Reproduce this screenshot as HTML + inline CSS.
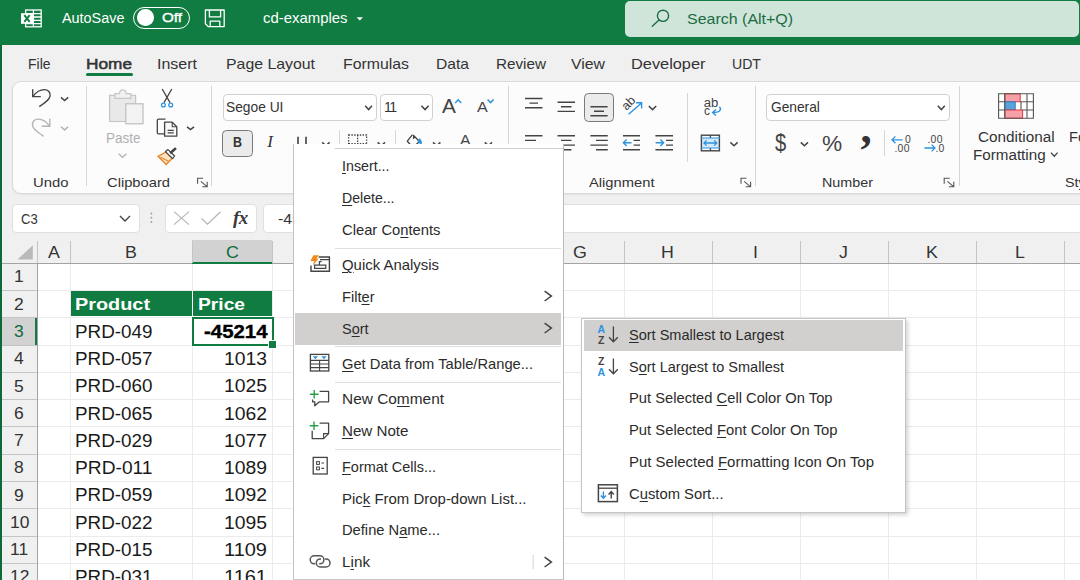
<!DOCTYPE html>
<html lang="en">
<head>
<meta charset="utf-8">
<title>cd-examples - Excel</title>
<style>
html,body{margin:0;padding:0;}
body{width:1080px;height:580px;overflow:hidden;position:relative;background:#f0f0f0;font-family:"Liberation Sans",sans-serif;}
.a{position:absolute;}
.t{position:absolute;white-space:pre;line-height:20px;height:20px;transform-origin:0 50%;}
.t u{text-decoration:underline;text-underline-offset:2px;text-decoration-thickness:1px;}
svg{position:absolute;overflow:visible;}
.vsep{position:absolute;width:1px;background:#d6d6d6;}
.hl{position:absolute;height:1px;background:#ebebeb;left:38px;width:1042px;}
.vl{position:absolute;width:1px;background:#ebebeb;top:264px;height:316px;}
.msep{position:absolute;height:1px;background:#e1dfdd;left:335px;width:226px;}
</style>
</head>
<body>
<!-- ================= TITLE BAR ================= -->
<div class="a" id="titlebar" style="left:0;top:0;width:1080px;height:45px;background:#107c41;"></div>
<div class="a" id="search" style="left:625.2px;top:0.6px;width:454px;height:36px;background:#cfe5d9;border-radius:5px;"></div>
<div class="a" id="toggle" style="left:133px;top:7px;width:55px;height:20px;border:1.5px solid #fff;border-radius:12px;"></div>
<div class="a" style="left:137.2px;top:9.4px;width:16.6px;height:16.6px;border-radius:50%;background:#fff;"></div>
<svg id="ic-excel" style="left:0;top:0" width="60" height="45" viewBox="0 0 60 45">
  <g fill="none" stroke="#fff" stroke-width="1.3">
    <rect x="25.6" y="10" width="15.6" height="16.8"/>
    <path d="M33.4 10V26.8M33.4 13.6H41.2M33.4 17H41.2M33.4 20.3H41.2M33.4 23.6H41.2M25.6 13.6H33.4M25.6 23.6H33.4"/>
  </g>
  <rect x="21" y="13.2" width="12.4" height="10.6" fill="#fff"/>
  <path d="M24.3 15.2L29.7 21.8M29.7 15.2L24.3 21.8" stroke="#107c41" stroke-width="1.9" fill="none"/>
</svg>
<svg id="ic-save" style="left:200px;top:5px" width="30" height="26" viewBox="200 5 30 26">
  <g fill="none" stroke="#fff" stroke-width="1.3" stroke-linejoin="round">
    <path d="M205.4 10H224.2V26.6H208.2L205.4 23.8Z"/>
    <path d="M209.4 10V16.9H220.6V10"/>
    <path d="M210.2 26.6V21.2H219.8V26.6"/>
  </g>
</svg>
<svg id="ic-caret" style="left:355px;top:15px" width="10" height="8" viewBox="355 15 10 8"><path d="M356.6 17.2H363L359.8 20.6Z" fill="#fff"/></svg>
<svg id="ic-search" style="left:648px;top:6px" width="26" height="24" viewBox="648 6 26 24">
  <g fill="none" stroke="#1e6b43" stroke-width="1.4" stroke-linecap="round">
    <circle cx="663" cy="15.8" r="5.6"/><path d="M659 20L652.3 26.2"/>
  </g>
</svg>


<!-- ================= TABS ================= -->
<div class="a" style="left:85.8px;top:73.1px;width:47.2px;height:3px;background:#107c41;border-radius:1.5px;"></div>

<!-- ================= RIBBON ================= -->
<div class="a" id="ribbon" style="left:12px;top:80.5px;width:1090px;height:111.5px;background:#fcfcfc;border:1px solid #dadada;border-radius:9px;box-shadow:0 1px 2px rgba(0,0,0,.06);"></div>
<div class="vsep" style="left:86px;top:86px;height:100px;"></div>
<div class="vsep" style="left:211px;top:86px;height:100px;"></div>
<div class="vsep" style="left:508px;top:86px;height:100px;"></div>
<div class="vsep" style="left:755px;top:86px;height:100px;"></div>
<div class="vsep" style="left:959px;top:86px;height:100px;"></div>
<div class="vsep" style="left:687px;top:93px;height:69px;"></div>
<div class="vsep" style="left:339px;top:130px;height:26px;"></div>
<div class="vsep" style="left:395px;top:130px;height:26px;"></div>
<div class="vsep" style="left:884px;top:130px;height:26px;"></div>
<!-- combo boxes -->
<div class="a" style="left:223px;top:94px;width:152px;height:25px;background:#fff;border:1px solid #d1d1d1;border-radius:4px;"></div>
<div class="a" style="left:379.6px;top:94px;width:51.6px;height:25px;background:#fff;border:1px solid #d1d1d1;border-radius:4px;"></div>
<div class="a" style="left:766px;top:94px;width:182px;height:25px;background:#fff;border:1px solid #d1d1d1;border-radius:4px;"></div>
<!-- Bold button (active) -->
<div class="a" style="left:222.2px;top:130px;width:28.4px;height:25.4px;background:#ebebeb;border:1.2px solid #7a7a7a;border-radius:4.5px;"></div>
<!-- bottom-align button (active) -->
<div class="a" style="left:584px;top:93.2px;width:28.4px;height:26.4px;background:#ebebeb;border:1.2px solid #7a7a7a;border-radius:4.5px;"></div>
<svg id="ribbon-icons" style="left:0;top:80px" width="1080" height="112" viewBox="0 80 1080 112">
<path d="M32.7 89.2V96.6H40.8" fill="none" stroke="#444" stroke-width="1.4"/>
<path d="M33 96.3C36.5 91.5 41 89.4 45 89.6C48.6 89.9 50.6 92.8 50.1 96C49.5 99.4 46.5 101.7 39.3 106.6" fill="none" stroke="#444" stroke-width="1.4"/>
<path d="M61 97.4L64.6 100.6L68.2 97.4" fill="none" stroke="#444" stroke-width="1.5"/>
<path d="M49.8 118.7V126.2H41.7" fill="none" stroke="#b4b4b4" stroke-width="1.4"/>
<path d="M49.5 125.9C46 121 41.6 118.9 37.6 119.1C34 119.4 32 122.3 32.5 125.5C33.1 128.9 36.4 131.4 43.6 136.3" fill="none" stroke="#b4b4b4" stroke-width="1.4"/>
<path d="M61 126.7L64.6 129.9L68.2 126.7" fill="none" stroke="#b4b4b4" stroke-width="1.5"/>
<rect x="109.6" y="95.3" width="26" height="26.2" fill="#e9e9e9" stroke="#c6c6c6" stroke-width="1.2"/>
<path d="M115 98.3V93.6H119.6C119.6 91.3 121.2 89.9 122.8 89.9C124.4 89.9 126 91.3 126 93.6H130.8V98.3Z" fill="#f1f1f1" stroke="#c6c6c6" stroke-width="1.2"/>
<rect x="125.8" y="103.8" width="17.2" height="20" fill="#f3f3f3" stroke="#bdbdbd" stroke-width="1.2"/>
<path d="M118.6 153.8L122.5 157.3L126.4 153.8" fill="none" stroke="#b4b4b4" stroke-width="1.3"/>
<path d="M162.2 89L170 102.6M171.8 89L164 102.6" fill="none" stroke="#444" stroke-width="1.3"/>
<circle cx="163.4" cy="105" r="1.9" fill="none" stroke="#2b93e0" stroke-width="1.3"/><circle cx="170.7" cy="105" r="1.9" fill="none" stroke="#2b93e0" stroke-width="1.3"/>
<path d="M164.4 133.8H158.6Q157.3 133.8 157.3 132.5V120.4Q157.3 119.1 158.6 119.1H165.5" fill="none" stroke="#444" stroke-width="1.3"/>
<path d="M164.6 122.2H172.2L176.8 126.8V136.2H164.6Z" fill="#f9f9f9" stroke="#444" stroke-width="1.3" stroke-linejoin="round"/>
<path d="M172.2 122.2V126.8H176.8M167.6 130.4H173.8M167.6 132.9H173.8" fill="none" stroke="#444" stroke-width="1.1"/>
<path d="M187 126.8L190.5 129.6L194 126.8" fill="none" stroke="#444" stroke-width="1.5"/>
<path d="M158 156.3L166 152L172.2 158.2L166.2 164.4Z" fill="#fbe3c4" stroke="#e8872a" stroke-width="1.4" stroke-linejoin="round"/>
<path d="M160.5 157.3L168.6 161.2" stroke="#e8872a" stroke-width="1.2" fill="none"/>
<path d="M165.4 151.6L168 149.6L174.6 156L172.6 158.6Z" fill="#f9f9f9" stroke="#444" stroke-width="1.2" stroke-linejoin="round"/>
<path d="M171 152.4L175.2 148.8" stroke="#444" stroke-width="2.6" stroke-linecap="round" fill="none"/>
<path d="M197.6 183.7V178.2H203.1M200.79999999999998 181.39999999999998L207.0 186.6M207.2 181.79999999999998V186.79999999999998H202.2" fill="none" stroke="#555" stroke-width="1.1"/>
<path d="M741 183.7V178.2H746.5M744.2 181.39999999999998L750.4 186.6M750.6 181.79999999999998V186.79999999999998H745.6" fill="none" stroke="#555" stroke-width="1.1"/>
<path d="M944.2 183.7V178.2H949.7M947.4000000000001 181.39999999999998L953.6 186.6M953.8000000000001 181.79999999999998V186.79999999999998H948.8000000000001" fill="none" stroke="#555" stroke-width="1.1"/>
<path d="M365.2 105.8L368.6 109.6L372 105.8" fill="none" stroke="#444" stroke-width="1.5"/>
<path d="M421.4 105.8L425.0 109.6L428.6 105.8" fill="none" stroke="#444" stroke-width="1.5"/>
<path d="M937.8 105.8L941.3 109.6L944.8 105.8" fill="none" stroke="#444" stroke-width="1.5"/>
<path d="M455.2 102.9L458.2 99.8L461.2 102.9" fill="none" stroke="#2b93e0" stroke-width="1.5"/>
<path d="M487.6 99.4L490.6 102.6L493.6 99.4" fill="none" stroke="#2b93e0" stroke-width="1.5"/>
<path d="M298 136.7V146Q298 150 302 150Q306 150 306 146V136.7" fill="none" stroke="#444" stroke-width="1.6"/>
<path d="M322.2 142.4L325.9 145.8L329.6 142.4" fill="none" stroke="#444" stroke-width="1.5"/>
<rect x="348.6" y="135" width="18" height="16" fill="none" stroke="#444" stroke-width="1.3" stroke-dasharray="1.4 1.4"/>
<path d="M357.6 135V151" stroke="#444" stroke-width="1.3" stroke-dasharray="1.4 1.4"/>
<path d="M348.6 143.6H366.6" stroke="#444" stroke-width="1.3" stroke-dasharray="1.4 1.4"/>
<path d="M377.6 142.4L381.3 145.8L385 142.4" fill="none" stroke="#444" stroke-width="1.5"/>
<path d="M412.5 134.6L407.3 141.2L413 147.5L419.5 141.5L413.6 135.5V139" fill="none" stroke="#444" stroke-width="1.3" stroke-linejoin="round"/>
<path d="M419.6 138.6C421.4 140.6 421.9 142.6 421.4 145L418 141.4Z" fill="#2b93e0" stroke="#2b93e0" stroke-width="0.8"/>
<path d="M433 142.4L436.7 145.8L440.4 142.4" fill="none" stroke="#444" stroke-width="1.5"/>
<path d="M484.8 142.4L488.4 145.8L492 142.4" fill="none" stroke="#444" stroke-width="1.5"/>
<path d="M525 98.5H542.5M529.5 103.1H538M525 107.7H542.5" fill="none" stroke="#444" stroke-width="1.4"/>
<path d="M557.5 102.2H575M561 106.8H571.5M557.5 111.4H575" fill="none" stroke="#444" stroke-width="1.4"/>
<path d="M590.4 106.8H607.6M594 111.3H604M590.4 115.8H607.6" fill="none" stroke="#444" stroke-width="1.4"/>
<text transform="translate(626.4 111) rotate(-45)" font-family="Liberation Sans, sans-serif" font-size="12.5" fill="#444">ab</text>
<path d="M628.6 114.2L641.2 103.2M636 102.8H641.6V108.4" fill="none" stroke="#2b93e0" stroke-width="1.4"/>
<path d="M648.8 106L652.5 109.6L656.2 106" fill="none" stroke="#444" stroke-width="1.5"/>
<path d="M525 135.7H542.5M525 140.4H536M525 145.1H542.5M525 149.8H536" fill="none" stroke="#444" stroke-width="1.4"/>
<path d="M557.5 135.7H575M561 140.4H571.5M557.5 145.1H575M561 149.8H571.5" fill="none" stroke="#444" stroke-width="1.4"/>
<path d="M590.4 135.7H607.8M596 140.4H607.8M590.4 145.1H607.8M596 149.8H607.8" fill="none" stroke="#444" stroke-width="1.4"/>
<path d="M623 135.7H640M633.6 140.4H640M633.6 145.1H640M623 149.8H640" fill="none" stroke="#444" stroke-width="1.4"/>
<path d="M623.4 142.8H631.5M626.6 139.6L623.4 142.8L626.6 146" fill="none" stroke="#2b93e0" stroke-width="1.4"/>
<path d="M655.4 135.7H673M666 140.4H673M666 145.1H673M655.4 149.8H673" fill="none" stroke="#444" stroke-width="1.4"/>
<path d="M655.6 142.8H663.6M660.4 139.6L663.6 142.8L660.4 146" fill="none" stroke="#2b93e0" stroke-width="1.4"/>
<text x="703.8" y="106.8" font-family="Liberation Sans, sans-serif" font-size="12" textLength="14.6" lengthAdjust="spacingAndGlyphs" fill="#444">ab</text>
<text x="704" y="114.8" font-family="Liberation Sans, sans-serif" font-size="12" fill="#444">c</text>
<path d="M719.4 106.8C721.6 109.2 720.6 112.6 713 112.4M716 109.4L712.6 112.4L716 115.6" fill="none" stroke="#2b93e0" stroke-width="1.4"/>
<rect x="701.4" y="138" width="18" height="10" fill="#d6e9f9"/>
<rect x="701.4" y="135.2" width="18" height="15.6" fill="none" stroke="#444" stroke-width="1.4"/>
<path d="M710.4 135.2V138M710.4 148V150.8" stroke="#444" stroke-width="1.3"/>
<path d="M700.8 138H720M700.8 148H720" stroke="#2b93e0" stroke-width="1.2"/>
<path d="M704 143H716.8M706.6 140.4L704 143L706.6 145.6M714.2 140.4L716.8 143L714.2 145.6" fill="none" stroke="#2b93e0" stroke-width="1.3"/>
<path d="M730.4 142.4L734.0 145.8L737.6 142.4" fill="none" stroke="#444" stroke-width="1.5"/>
<path d="M800.8 142.4L804.4 145.8L808 142.4" fill="none" stroke="#444" stroke-width="1.5"/>
<text x="860.6" y="143.4" font-family="Liberation Serif, serif" font-weight="700" font-size="45" fill="#333">,</text>
<path d="M892 139.8H902.6M895.4 136.4L892 139.8L895.4 143.2" fill="none" stroke="#2b93e0" stroke-width="1.3"/>
<text x="905" y="142.6" font-family="Liberation Sans, sans-serif" font-size="10.4" fill="#444">0</text><text x="894.4" y="152" font-family="Liberation Sans, sans-serif" font-size="10.4" fill="#444" letter-spacing="0.3">.00</text>
<text x="927.4" y="142.6" font-family="Liberation Sans, sans-serif" font-size="10.4" fill="#444" letter-spacing="0.3">.00</text>
<path d="M924.4 148H935M931.6 144.6L935 148L931.6 151.4" fill="none" stroke="#2b93e0" stroke-width="1.3"/>
<text x="935.4" y="152" font-family="Liberation Sans, sans-serif" font-size="10.4" fill="#444" letter-spacing="0.3">.0</text>
<rect x="998.6" y="93.8" width="34.8" height="24.4" fill="#fff"/>
<rect x="1004.8" y="93.8" width="15.4" height="8" fill="#f6a0a8" stroke="#e2383f" stroke-width="1"/>
<rect x="1004.8" y="101.8" width="10.4" height="8.2" fill="#5aa2dc" stroke="#2b7fc6" stroke-width="1"/>
<rect x="1004.8" y="110" width="17.8" height="8.2" fill="#f6a0a8" stroke="#e2383f" stroke-width="1"/>
<path d="M998.6 93.8H1033.4V118.2H998.6ZM998.6 101.8H1004.8M1020.2 101.8H1033.4M998.6 110H1004.8M1022.6 110H1033.4M1004.8 93.8V118.2M1027 93.8V118.2M1021 102V110" fill="none" stroke="#555" stroke-width="1.1"/>
<path d="M1051 152.6L1054.3 156.2L1057.6 152.6" fill="none" stroke="#444" stroke-width="1.3"/>
</svg>

<!-- ================= FORMULA BAR ================= -->
<div class="a" style="left:12px;top:204px;width:126px;height:27px;background:#fff;border:1px solid #e0e0e0;border-radius:4px;"></div>
<div class="a" style="left:165px;top:204px;width:90px;height:27px;background:#fff;border:1px solid #e0e0e0;border-radius:4px;"></div>
<div class="a" style="left:263px;top:204px;width:830px;height:27px;background:#fff;border:1px solid #e0e0e0;border-radius:4px;"></div>
<svg style="left:115px;top:205px" width="150" height="26" viewBox="115 205 150 26">
  <path d="M120 216L125 221L130 216" fill="none" stroke="#444" stroke-width="1.4"/>
  <g fill="#9a9a9a"><circle cx="151.4" cy="213.5" r="0.9"/><circle cx="151.4" cy="217.7" r="0.9"/><circle cx="151.4" cy="221.9" r="0.9"/></g>
  <path d="M174 211.6L189 224.6M189 211.6L174 224.6" fill="none" stroke="#b4b4b4" stroke-width="1.2"/>
  <path d="M201.5 218.5L207.5 224.2L220.5 211.8" fill="none" stroke="#b4b4b4" stroke-width="1.2"/>
</svg>
<span class="t" style="left:233px;top:207.5px;font-family:'Liberation Serif',serif;font-style:italic;font-weight:700;font-size:19px;color:#3a3a3a;letter-spacing:-0.5px;">fx</span>


<!-- ================= GRID ================= -->
<div class="a" id="grid" style="left:2px;top:240px;width:1078px;height:340px;background:#fff;"></div>
<!-- column header band -->
<div class="a" style="left:2px;top:240px;width:1078px;height:23px;background:#f0f0f0;border-bottom:1.5px solid #a3a3a3;"></div>
<!-- row header band -->
<div class="a" style="left:2px;top:264px;width:35px;height:316px;background:#f0f0f0;border-right:1.5px solid #a3a3a3;"></div>
<!-- selected col header -->
<div class="a" style="left:192px;top:240px;width:80px;height:22px;background:#d2d2d2;border-bottom:2px solid #107c41;"></div>
<!-- selected row header -->
<div class="a" style="left:2px;top:317px;width:33px;height:28px;background:#d2d2d2;border-right:2.5px solid #107c41;"></div>
<div class="hl" style="top:290.1px;"></div>
<div class="a" style="left:2px;top:290.1px;width:35px;height:1px;background:#c4c4c4;"></div>
<div class="hl" style="top:317.3px;"></div>
<div class="a" style="left:2px;top:317.3px;width:35px;height:1px;background:#c4c4c4;"></div>
<div class="hl" style="top:344.6px;"></div>
<div class="a" style="left:2px;top:344.6px;width:35px;height:1px;background:#c4c4c4;"></div>
<div class="hl" style="top:371.9px;"></div>
<div class="a" style="left:2px;top:371.9px;width:35px;height:1px;background:#c4c4c4;"></div>
<div class="hl" style="top:399.1px;"></div>
<div class="a" style="left:2px;top:399.1px;width:35px;height:1px;background:#c4c4c4;"></div>
<div class="hl" style="top:426.4px;"></div>
<div class="a" style="left:2px;top:426.4px;width:35px;height:1px;background:#c4c4c4;"></div>
<div class="hl" style="top:453.7px;"></div>
<div class="a" style="left:2px;top:453.7px;width:35px;height:1px;background:#c4c4c4;"></div>
<div class="hl" style="top:481.0px;"></div>
<div class="a" style="left:2px;top:481.0px;width:35px;height:1px;background:#c4c4c4;"></div>
<div class="hl" style="top:508.2px;"></div>
<div class="a" style="left:2px;top:508.2px;width:35px;height:1px;background:#c4c4c4;"></div>
<div class="hl" style="top:535.5px;"></div>
<div class="a" style="left:2px;top:535.5px;width:35px;height:1px;background:#c4c4c4;"></div>
<div class="hl" style="top:562.8px;"></div>
<div class="a" style="left:2px;top:562.8px;width:35px;height:1px;background:#c4c4c4;"></div>
<div class="hl" style="top:590.0px;"></div>
<div class="a" style="left:2px;top:590.0px;width:35px;height:1px;background:#c4c4c4;"></div>
<div class="vl" style="left:70px;"></div>
<div class="a" style="left:70px;top:241px;width:1px;height:22px;background:#c4c4c4;"></div>
<div class="vl" style="left:192px;"></div>
<div class="a" style="left:192px;top:241px;width:1px;height:22px;background:#c4c4c4;"></div>
<div class="vl" style="left:271.5px;"></div>
<div class="a" style="left:271.5px;top:241px;width:1px;height:22px;background:#c4c4c4;"></div>
<div class="vl" style="left:359.5px;"></div>
<div class="a" style="left:359.5px;top:241px;width:1px;height:22px;background:#c4c4c4;"></div>
<div class="vl" style="left:447.5px;"></div>
<div class="a" style="left:447.5px;top:241px;width:1px;height:22px;background:#c4c4c4;"></div>
<div class="vl" style="left:535.5px;"></div>
<div class="a" style="left:535.5px;top:241px;width:1px;height:22px;background:#c4c4c4;"></div>
<div class="vl" style="left:623.5px;"></div>
<div class="a" style="left:623.5px;top:241px;width:1px;height:22px;background:#c4c4c4;"></div>
<div class="vl" style="left:711.5px;"></div>
<div class="a" style="left:711.5px;top:241px;width:1px;height:22px;background:#c4c4c4;"></div>
<div class="vl" style="left:799.5px;"></div>
<div class="a" style="left:799.5px;top:241px;width:1px;height:22px;background:#c4c4c4;"></div>
<div class="vl" style="left:887.5px;"></div>
<div class="a" style="left:887.5px;top:241px;width:1px;height:22px;background:#c4c4c4;"></div>
<div class="vl" style="left:975.5px;"></div>
<div class="a" style="left:975.5px;top:241px;width:1px;height:22px;background:#c4c4c4;"></div>
<div class="vl" style="left:1063.5px;"></div>
<div class="a" style="left:1063.5px;top:241px;width:1px;height:22px;background:#c4c4c4;"></div>
<div class="a" style="left:37px;top:241px;width:1px;height:22px;background:#c4c4c4;"></div>
<svg style="left:15px;top:243px" width="20" height="18" viewBox="15 243 20 18"><path d="M17.5 259.5H32.8V245.3Z" fill="#b9b9b9"/></svg>
<!-- table header cells -->
<div class="a" style="left:70.5px;top:290.5px;width:201px;height:25.5px;background:#107c41;"></div>
<div class="a" style="left:192px;top:290.5px;width:1px;height:25.5px;background:#fff;"></div>
<!-- selection -->
<div class="a" style="left:191.5px;top:316.5px;width:78px;height:25.5px;border:2px solid #107c41;"></div>
<div class="a" style="left:268px;top:340px;width:7px;height:7px;background:#107c41;border:1px solid #fff;"></div>

<span class="t" style="left:62px;top:8.2px;font-size:14px;color:#ffffff;transform:scaleX(1.0277);">AutoSave</span>
<span class="t" style="left:161.7px;top:7.6px;font-size:13.6px;color:#ffffff;transform:scaleX(1.1179);-webkit-text-stroke:0.4px #fff;">Off</span>
<span class="t" style="left:263.3px;top:8.4px;font-size:14.3px;color:#ffffff;transform:scaleX(1.0424);">cd-examples</span>
<span class="t" style="left:687.2px;top:8.6px;font-size:14.6px;color:#1e6b43;transform:scaleX(1.0947);">Search (Alt+Q)</span>
<span class="t" style="left:28px;top:53.6px;font-size:14.8px;color:#333333;transform:scaleX(0.9436);">File</span>
<span class="t" style="left:86px;top:53.6px;font-size:14.8px;color:#333333;transform:scaleX(1.165);-webkit-text-stroke:0.5px #333;">Home</span>
<span class="t" style="left:157px;top:53.6px;font-size:14.8px;color:#333333;transform:scaleX(1.0806);">Insert</span>
<span class="t" style="left:226px;top:53.6px;font-size:14.8px;color:#333333;transform:scaleX(1.0709);">Page Layout</span>
<span class="t" style="left:343px;top:53.6px;font-size:14.8px;color:#333333;transform:scaleX(1.0702);">Formulas</span>
<span class="t" style="left:436px;top:53.6px;font-size:14.8px;color:#333333;transform:scaleX(1.0555);">Data</span>
<span class="t" style="left:496px;top:53.6px;font-size:14.8px;color:#333333;transform:scaleX(1.0303);">Review</span>
<span class="t" style="left:571px;top:53.6px;font-size:14.8px;color:#333333;transform:scaleX(1.0688);">View</span>
<span class="t" style="left:630.5px;top:53.6px;font-size:14.8px;color:#333333;transform:scaleX(1.1045);">Developer</span>
<span class="t" style="left:731.5px;top:53.6px;font-size:14.8px;color:#333333;transform:scaleX(0.9533);">UDT</span>
<span class="t" style="left:33px;top:173.0px;font-size:13.6px;color:#333333;transform:scaleX(1.0923);">Undo</span>
<span class="t" style="left:107.2px;top:173.0px;font-size:13.6px;color:#333333;transform:scaleX(1.0827);">Clipboard</span>
<span class="t" style="left:588.5px;top:173.0px;font-size:13.6px;color:#333333;transform:scaleX(1.0835);">Alignment</span>
<span class="t" style="left:822px;top:173.0px;font-size:13.6px;color:#333333;transform:scaleX(1.0546);">Number</span>
<span class="t" style="left:1065.3px;top:173.0px;font-size:13.6px;color:#333333;transform:scaleX(1.0539);">Sty</span>
<span class="t" style="left:106.2px;top:127.7px;font-size:14px;color:#b0b0b0;transform:scaleX(0.9634);">Paste</span>
<span class="t" style="left:226.4px;top:96.9px;font-size:14.5px;color:#333333;transform:scaleX(0.9493);">Segoe UI</span>
<span class="t" style="left:384.2px;top:96.9px;font-size:14.5px;color:#333333;transform:scaleX(0.9692);letter-spacing:-1.65px;">11</span>
<span class="t" style="left:770.8px;top:96.7px;font-size:14.5px;color:#333333;transform:scaleX(0.9478);">General</span>
<span class="t" style="left:977.7px;top:126.9px;font-size:14px;color:#333333;transform:scaleX(1.0933);">Conditional</span>
<span class="t" style="left:972.8px;top:144.5px;font-size:14px;color:#333333;transform:scaleX(1.0848);">Formatting</span>
<span class="t" style="left:1069px;top:126.9px;font-size:14px;color:#333333;transform:scaleX(1.0402);">Fo</span>
<span class="t" style="left:233px;top:132.0px;font-size:15.4px;color:#333333;transform:scaleX(0.809);font-weight:700;">B</span>
<span class="t" style="left:267.16px;top:132.3px;font-size:17px;color:#333333;font-style:italic;font-family:'Liberation Serif',serif;">I</span>
<span class="t" style="left:774.6px;top:133.3px;font-size:23.5px;color:#444;transform:scaleX(0.8564);">$</span>
<span class="t" style="left:822.4px;top:133.5px;font-size:22.5px;color:#444;transform:scaleX(1.0092);">%</span>
<span class="t" style="left:20.8px;top:208.5px;font-size:14px;color:#333333;transform:scaleX(0.9326);">C3</span>
<span class="t" style="left:277.8px;top:208.5px;font-size:14.5px;color:#333333;transform:scaleX(1.0896);">-45214</span>
<span class="t" style="left:48.06px;top:243.2px;font-size:16.8px;color:#333333;transform:scaleX(1.06);">A</span>
<span class="t" style="left:125.06px;top:243.2px;font-size:16.8px;color:#333333;transform:scaleX(1.06);">B</span>
<span class="t" style="left:226.07px;top:243.2px;font-size:16.8px;color:#0e6b3a;transform:scaleX(1.06);">C</span>
<span class="t" style="left:309.07px;top:243.2px;font-size:16.8px;color:#333333;transform:scaleX(1.06);">D</span>
<span class="t" style="left:397.56px;top:243.2px;font-size:16.8px;color:#333333;transform:scaleX(1.06);">E</span>
<span class="t" style="left:486.06px;top:243.2px;font-size:16.8px;color:#333333;transform:scaleX(1.06);">F</span>
<span class="t" style="left:572.58px;top:243.2px;font-size:16.8px;color:#333333;transform:scaleX(1.06);">G</span>
<span class="t" style="left:661.07px;top:243.2px;font-size:16.8px;color:#333333;transform:scaleX(1.06);">H</span>
<span class="t" style="left:753.02px;top:243.2px;font-size:16.8px;color:#333333;transform:scaleX(1.06);">I</span>
<span class="t" style="left:839.05px;top:243.2px;font-size:16.8px;color:#333333;transform:scaleX(1.06);">J</span>
<span class="t" style="left:925.56px;top:243.2px;font-size:16.8px;color:#333333;transform:scaleX(1.06);">K</span>
<span class="t" style="left:1014.55px;top:243.2px;font-size:16.8px;color:#333333;transform:scaleX(1.06);">L</span>
<span class="t" style="left:14.44px;top:267.4px;font-size:16.8px;color:#333333;transform:scaleX(1.04);">1</span>
<span class="t" style="left:14.44px;top:294.7px;font-size:16.8px;color:#333333;transform:scaleX(1.04);">2</span>
<span class="t" style="left:14.44px;top:322.0px;font-size:16.8px;color:#0e6b3a;transform:scaleX(1.04);">3</span>
<span class="t" style="left:14.44px;top:349.2px;font-size:16.8px;color:#333333;transform:scaleX(1.04);">4</span>
<span class="t" style="left:14.44px;top:376.5px;font-size:16.8px;color:#333333;transform:scaleX(1.04);">5</span>
<span class="t" style="left:14.44px;top:403.8px;font-size:16.8px;color:#333333;transform:scaleX(1.04);">6</span>
<span class="t" style="left:14.44px;top:431.1px;font-size:16.8px;color:#333333;transform:scaleX(1.04);">7</span>
<span class="t" style="left:14.44px;top:458.3px;font-size:16.8px;color:#333333;transform:scaleX(1.04);">8</span>
<span class="t" style="left:14.44px;top:485.6px;font-size:16.8px;color:#333333;transform:scaleX(1.04);">9</span>
<span class="t" style="left:9.59px;top:512.9px;font-size:16.8px;color:#333333;transform:scaleX(1.04);">10</span>
<span class="t" style="left:10.24px;top:540.1px;font-size:16.8px;color:#333333;transform:scaleX(1.04);">11</span>
<span class="t" style="left:9.59px;top:567.4px;font-size:16.8px;color:#333333;transform:scaleX(1.04);">12</span>
<span class="t" style="left:75px;top:294.0px;font-size:17.3px;color:#ffffff;transform:scaleX(1.1486);font-weight:700;">Product</span>
<span class="t" style="left:198px;top:294.0px;font-size:17.3px;color:#ffffff;transform:scaleX(1.1116);font-weight:700;">Price</span>
<span class="t" style="left:75px;top:321.7px;font-size:17.6px;color:#1a1a1a;transform:scaleX(1.0708);">PRD-049</span>
<span class="t" style="left:204px;top:321.7px;font-size:17.6px;color:#000;transform:scaleX(1.1588);font-weight:700;-webkit-text-stroke:0.35px #000;">-45214</span>
<span class="t" style="left:75px;top:348.9px;font-size:17.6px;color:#1a1a1a;transform:scaleX(1.0708);">PRD-057</span>
<span class="t" style="left:224px;top:348.9px;font-size:17.6px;color:#1a1a1a;transform:scaleX(1.0986);">1013</span>
<span class="t" style="left:75px;top:376.2px;font-size:17.6px;color:#1a1a1a;transform:scaleX(1.0708);">PRD-060</span>
<span class="t" style="left:224px;top:376.2px;font-size:17.6px;color:#1a1a1a;transform:scaleX(1.0986);">1025</span>
<span class="t" style="left:75px;top:403.5px;font-size:17.6px;color:#1a1a1a;transform:scaleX(1.0708);">PRD-065</span>
<span class="t" style="left:224px;top:403.5px;font-size:17.6px;color:#1a1a1a;transform:scaleX(1.0986);">1062</span>
<span class="t" style="left:75px;top:430.8px;font-size:17.6px;color:#1a1a1a;transform:scaleX(1.0708);">PRD-029</span>
<span class="t" style="left:224px;top:430.8px;font-size:17.6px;color:#1a1a1a;transform:scaleX(1.0986);">1077</span>
<span class="t" style="left:75px;top:458.0px;font-size:17.6px;color:#1a1a1a;transform:scaleX(1.0906);">PRD-011</span>
<span class="t" style="left:224px;top:458.0px;font-size:17.6px;color:#1a1a1a;transform:scaleX(1.0986);">1089</span>
<span class="t" style="left:75px;top:485.3px;font-size:17.6px;color:#1a1a1a;transform:scaleX(1.0708);">PRD-059</span>
<span class="t" style="left:224px;top:485.3px;font-size:17.6px;color:#1a1a1a;transform:scaleX(1.0986);">1092</span>
<span class="t" style="left:75px;top:512.6px;font-size:17.6px;color:#1a1a1a;transform:scaleX(1.0708);">PRD-022</span>
<span class="t" style="left:224px;top:512.6px;font-size:17.6px;color:#1a1a1a;transform:scaleX(1.0986);">1095</span>
<span class="t" style="left:75px;top:539.8px;font-size:17.6px;color:#1a1a1a;transform:scaleX(1.0708);">PRD-015</span>
<span class="t" style="left:224px;top:539.8px;font-size:17.6px;color:#1a1a1a;transform:scaleX(1.1363);">1109</span>
<span class="t" style="left:75px;top:567.1px;font-size:17.6px;color:#1a1a1a;transform:scaleX(1.0708);">PRD-031</span>
<span class="t" style="left:224px;top:567.1px;font-size:17.6px;color:#1a1a1a;transform:scaleX(1.1363);">1161</span>
<span class="t" style="left:441.85px;top:96.6px;font-size:19.3px;color:#444;transform:scaleX(1.08);">A</span>
<span class="t" style="left:476.91px;top:97.2px;font-size:14.7px;color:#444;transform:scaleX(1.1);">A</span>
<span class="t" style="left:459.74px;top:130.0px;font-size:15px;color:#444;transform:scaleX(1.05);">A</span>

<!-- left window edge -->
<div class="a" style="left:0;top:45px;width:1.6px;height:535px;background:#0e6b38;"></div>

<!-- ================= CONTEXT MENU ================= -->
<div class="a" id="menu" style="left:292.8px;top:144.4px;width:269.6px;height:435px;background:#fff;border-left:1.5px solid #c2c2c2;border-right:1.5px solid #b9b9b9;border-bottom:1.5px solid #c6c6c6;"></div>
<div class="a" style="left:335px;top:148px;width:228px;height:1.2px;background:#d0d0d0;"></div>
<div class="a" style="left:295px;top:313px;width:266px;height:31.5px;background:#d2d0ce;"></div>
<div class="msep" style="top:247.5px;"></div>
<div class="msep" style="top:346px;"></div>
<div class="msep" style="top:382px;"></div>
<div class="msep" style="top:449px;"></div>
<!-- submenu -->
<div class="a" id="submenu" style="left:581px;top:317.5px;width:322.5px;height:193px;background:#fff;border:1.5px solid #c6c6c6;box-shadow:2px 2px 4px rgba(0,0,0,.18);"></div>
<div class="a" style="left:583.5px;top:319.5px;width:319.5px;height:31px;background:#d2d0ce;"></div>
<svg id="menu-icons" style="left:290px;top:240px" width="630" height="340" viewBox="290 240 630 340">
<path d="M311 265.6V271.2H329.4V257H318.6M320 259.6H329.4" fill="none" stroke="#444" stroke-width="1.4"/>
<path d="M314.6 265.2H325.8V268.4H314.6ZM319.4 265V261.6H321.6" fill="none" stroke="#444" stroke-width="1.2"/>
<path d="M313.4 255.2H318.8L316.4 258.4H318.6L312.6 265.8L314.2 261H310.4Z" fill="#f08a1c"/>
<path d="M544.6 291.2L551.4 296.1L544.6 301" fill="none" stroke="#444" stroke-width="1.5"/>
<path d="M544.6 323.2L551.4 328.1L544.6 333" fill="none" stroke="#444" stroke-width="1.5"/>
<path d="M544.6 557.2L551.4 562.1L544.6 567" fill="none" stroke="#444" stroke-width="1.5"/>
<path d="M533.2 555V569" stroke="#dcdcdc" stroke-width="1.2"/>
<rect x="310.4" y="354.4" width="18.4" height="16.6" fill="#fff" stroke="#444" stroke-width="1.3"/>
<path d="M310.4 360.4H328.8M310.4 364H328.8M310.4 367.6H328.8M319.6 360.4V371" fill="none" stroke="#444" stroke-width="1.1"/>
<path d="M312.8 356.2H318L315.4 359.2ZM321.4 356.2H326.6L324 359.2Z" fill="#2b93e0"/>
<path d="M319.6 391.4H328.6V401.8H319.4L314.8 405.8V401.8H312.6V399.4" fill="none" stroke="#444" stroke-width="1.3" stroke-linejoin="round"/>
<path d="M314.2 390V398.6M309.9 394.3H318.5" stroke="#2a9d4a" stroke-width="1.4"/>
<path d="M319.6 423.2H328.6V433.6L323.6 438.6H312.2V430.8" fill="none" stroke="#444" stroke-width="1.3" stroke-linejoin="round"/>
<path d="M328.6 433.6H323.6V438.6" fill="none" stroke="#444" stroke-width="1.1"/>
<path d="M314 421.4V430M309.7 425.7H318.3" stroke="#2a9d4a" stroke-width="1.4"/>
<rect x="313.2" y="457.4" width="14" height="16.6" fill="none" stroke="#444" stroke-width="1.3"/>
<rect x="316.6" y="461.6" width="2.8" height="2.8" fill="none" stroke="#444" stroke-width="1"/><rect x="316.6" y="467" width="2.8" height="2.8" fill="none" stroke="#444" stroke-width="1"/>
<path d="M321.4 463H324M321.4 468.4H324" stroke="#444" stroke-width="1.1"/>
<path d="M315.2 563.8H314.2A4 4 0 0 1 314.2 555.8H319.9A4 4 0 0 1 319.9 563.8H319.2" fill="none" stroke="#555" stroke-width="1.5"/>
<path d="M325 558.9H326A4 4 0 0 1 326 566.9H320.3A4 4 0 0 1 320.3 558.9H321" fill="none" stroke="#555" stroke-width="1.5"/>
<text x="597.6" y="333.4" font-family="Liberation Sans, sans-serif" font-weight="700" font-size="10.5" fill="#2b93e0">A</text><text x="598" y="343.6" font-family="Liberation Sans, sans-serif" font-weight="700" font-size="10.5" fill="#444">Z</text>
<path d="M613.4 326.6V341.6M609 337.2L613.4 341.8L617.8 337.2" fill="none" stroke="#444" stroke-width="1.3"/>
<text x="598" y="365.4" font-family="Liberation Sans, sans-serif" font-weight="700" font-size="10.5" fill="#444">Z</text><text x="597.6" y="375.6" font-family="Liberation Sans, sans-serif" font-weight="700" font-size="10.5" fill="#2b93e0">A</text>
<path d="M613.4 358.6V373.6M609 369.2L613.4 373.8L617.8 369.2" fill="none" stroke="#444" stroke-width="1.3"/>
<rect x="598.4" y="484.8" width="19" height="16.8" fill="#fff" stroke="#444" stroke-width="1.5"/>
<path d="M598.4 488.2H617.4" stroke="#444" stroke-width="1.3"/>
<path d="M603.4 491.4V498M600.8 495.4L603.4 498.2L606 495.4" fill="none" stroke="#2b93e0" stroke-width="1.4"/>
<path d="M611.2 498.4V491.8M608.6 494.4L611.2 491.6L613.8 494.4" fill="none" stroke="#444" stroke-width="1.4"/>
</svg>
<span class="t" style="left:341.5px;top:156.0px;font-size:14.8px;color:#2b2b2b;transform:scaleX(0.9626);"><u>I</u>nsert...</span>
<span class="t" style="left:341.5px;top:188.0px;font-size:14.8px;color:#2b2b2b;transform:scaleX(0.9527);"><u>D</u>elete...</span>
<span class="t" style="left:341.5px;top:220.0px;font-size:14.8px;color:#2b2b2b;transform:scaleX(0.9979);">Clear Co<u>n</u>tents</span>
<span class="t" style="left:341.5px;top:255.0px;font-size:14.8px;color:#2b2b2b;transform:scaleX(1.0081);"><u>Q</u>uick Analysis</span>
<span class="t" style="left:341.5px;top:287.0px;font-size:14.8px;color:#2b2b2b;transform:scaleX(0.9881);">Filt<u>e</u>r</span>
<span class="t" style="left:341.5px;top:319.0px;font-size:14.8px;color:#2b2b2b;transform:scaleX(0.9764);">S<u>o</u>rt</span>
<span class="t" style="left:341.5px;top:354.0px;font-size:14.8px;color:#2b2b2b;transform:scaleX(0.9938);"><u>G</u>et Data from Table/Range...</span>
<span class="t" style="left:341.5px;top:389.0px;font-size:14.8px;color:#2b2b2b;transform:scaleX(1.0423);">New Co<u>m</u>ment</span>
<span class="t" style="left:341.5px;top:421.0px;font-size:14.8px;color:#2b2b2b;transform:scaleX(1.0236);"><u>N</u>ew Note</span>
<span class="t" style="left:341.5px;top:456.8px;font-size:14.8px;color:#2b2b2b;transform:scaleX(0.9771);"><u>F</u>ormat Cells...</span>
<span class="t" style="left:341.5px;top:488.6px;font-size:14.8px;color:#2b2b2b;transform:scaleX(1.0107);">Pic<u>k</u> From Drop-down List...</span>
<span class="t" style="left:341.5px;top:520.0px;font-size:14.8px;color:#2b2b2b;transform:scaleX(0.993);">Define N<u>a</u>me...</span>
<span class="t" style="left:341.5px;top:552.0px;font-size:14.8px;color:#2b2b2b;transform:scaleX(1.0311);">L<u>i</u>nk</span>
<span class="t" style="left:629px;top:324.5px;font-size:14.8px;color:#2b2b2b;transform:scaleX(0.9816);"><u>S</u>ort Smallest to Largest</span>
<span class="t" style="left:629px;top:356.5px;font-size:14.8px;color:#2b2b2b;transform:scaleX(0.9816);">S<u>o</u>rt Largest to Smallest</span>
<span class="t" style="left:629px;top:388.0px;font-size:14.8px;color:#2b2b2b;transform:scaleX(0.995);">Put Selected <u>C</u>ell Color On Top</span>
<span class="t" style="left:629px;top:420.0px;font-size:14.8px;color:#2b2b2b;transform:scaleX(0.9993);">Put Selected <u>F</u>ont Color On Top</span>
<span class="t" style="left:629px;top:452.0px;font-size:14.8px;color:#2b2b2b;transform:scaleX(1.0108);">Put Selected <u>F</u>ormatting Icon On Top</span>
<span class="t" style="left:629px;top:484.0px;font-size:14.8px;color:#2b2b2b;transform:scaleX(0.9993);">C<u>u</u>stom Sort...</span>
</body>
</html>
